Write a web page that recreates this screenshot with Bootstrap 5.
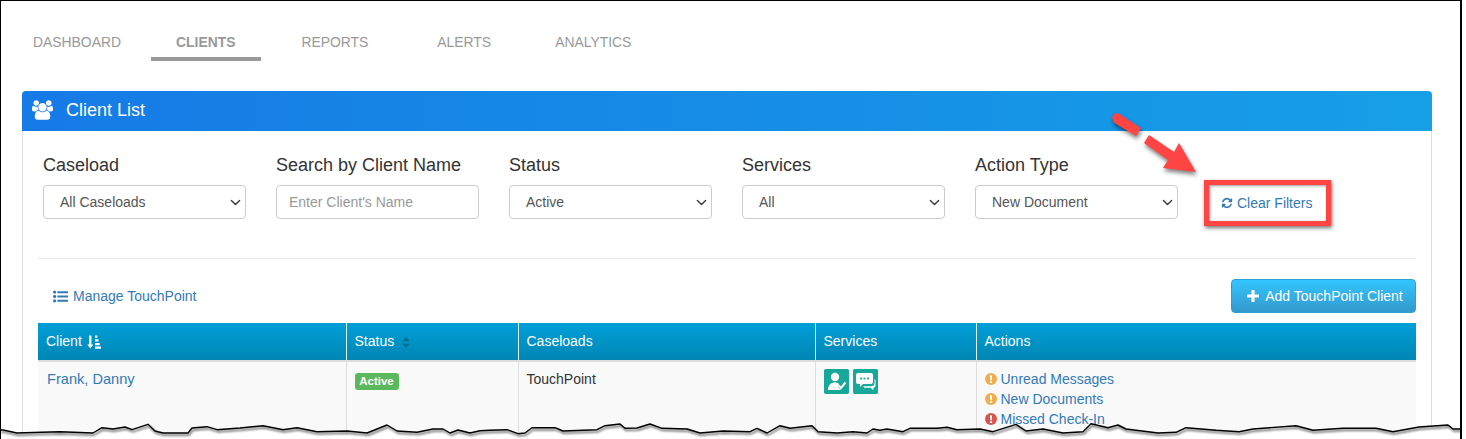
<!DOCTYPE html>
<html lang="en">
<head>
<meta charset="utf-8">
<title>Client List</title>
<link href="https://cdn.jsdelivr.net/npm/bootstrap@5.3.0/dist/css/bootstrap.min.css" rel="stylesheet">
<style>
html,body{margin:0;background:#fff;overflow:hidden}
body{font-family:"Liberation Sans",Arial,sans-serif;font-size:14px;color:#333;width:1466px;height:439px}
a{color:#337ab7;text-decoration:none}
.shot{position:relative;width:1462px;height:439px;border:solid #000;border-width:1px 2px 0 1px;overflow:hidden;padding:0 28px 0 21px;background:#fff}
.tabs{height:90px;padding-top:31px;flex-wrap:nowrap}
.tabs .nav-link{color:#999;font-size:13.9px;text-transform:uppercase;padding:0 25px;height:29px;line-height:21px;border-bottom:4px solid transparent;border-radius:0}
.tabs .nav-link.active-tab{font-weight:700;color:#999;border-bottom-color:#999;padding-right:26px}
.tab-first{margin-left:-14px;margin-right:5px}
.tab-second{margin-right:15px}
.tab-third{margin-right:19px}
.tab-fourth{margin-right:14px}
.panel{border:0;border-radius:4px 4px 0 0;--bs-card-border-color:transparent;background:transparent}
.panel-head{height:40px;background:linear-gradient(90deg,#167ae6,#169fe6);color:#fff;font-size:18px;border:0;padding:0 10px 2px;border-radius:4px 4px 0 0!important;gap:13px}
.panel-body{border:solid #ddd;border-width:0 1px;padding:0 15px;height:310px}
.filters{padding:20px 5px 0;gap:30px;height:128px;border-bottom:1px solid #e8e8e8}
.field{width:203px}
.field label{font-size:18px;line-height:28px;margin:0 0 6px;color:#333;display:block;white-space:nowrap}
.field .form-select,.field .form-control{height:34px;font-size:14px;color:#555;padding:0 30px 0 16px;border-color:#ccc;border-radius:4px;background-position:right 4px center;background-size:11px 11px}
.field .form-control{padding-left:12px}
.field .form-control::placeholder{color:#999}
.clear-link{margin:42px 0 0 13px;height:20px;line-height:20px;white-space:nowrap}
.toolbar{height:64px;padding:20px 0 10px 15px}
.toolbar .manage-link{gap:5px}
.add-btn{width:185px;height:34px;padding:0 0 0 3px;font-size:14px;color:#fff;background:linear-gradient(#33c5ff,#3399cc);border:1px solid #2f9fd3;border-radius:4px;display:flex;align-items:center;justify-content:center;gap:6px}
.add-btn:hover{color:#fff}
.tp-table{table-layout:fixed;width:1378px;margin:0;font-size:14px;color:#333;--bs-table-bg:#f9f9f9;--bs-table-color:#333}
.tp-table th{background:linear-gradient(#009fd9,#0086b3);color:#fff;font-weight:400;height:38px;padding:0 8px;border:0;border-left:1px solid #e4f3f9;border-bottom:2px solid #ddd;vertical-align:middle;box-shadow:none}
.tp-table th:first-child,.tp-table td:first-child{border-left:0}
.tp-table td{background:#f9f9f9;padding:7px 8px 8px;border:0;border-left:1px solid #ddd;vertical-align:top;height:80px;box-shadow:none;line-height:20px;color:#333}
.client-name{font-size:14.6px;padding-left:1px}
.status-pill{background:#5cb85c;color:#fff;font-size:11.5px;font-weight:700;padding:0;width:44px;height:17px;line-height:17px;border-radius:3px;display:block;margin-top:4px}
.svc{width:25px;height:25px;border-radius:2px;background:#17a89a;display:block}
.act{height:20px;white-space:nowrap;gap:4px}
.sort-icon{margin-left:1px}
.ann-box{position:absolute;left:1203px;top:179px;width:127px;height:46px;border:5px solid #ff4444;box-shadow:1px 2px 4px rgba(0,0,0,.55),inset 1px 1px 3px rgba(0,0,0,.4);pointer-events:none}
.ann-arrow{position:absolute;left:-1px;top:-1px;width:1466px;height:439px;pointer-events:none}
.arrow-art{filter:drop-shadow(1px 3px 2px rgba(0,0,0,.5))}
.tear-line{filter:drop-shadow(1px 2px 1.200px rgba(0,0,0,.7))}
</style>
</head>
<body>
<div class="shot">
  <ul class="nav tabs">
    <li class="nav-item tab-first"><a class="nav-link" href="#">Dashboard</a></li>
    <li class="nav-item tab-second"><a class="nav-link active-tab" href="#">Clients</a></li>
    <li class="nav-item tab-third"><a class="nav-link" href="#">Reports</a></li>
    <li class="nav-item tab-fourth"><a class="nav-link" href="#">Alerts</a></li>
    <li class="nav-item"><a class="nav-link" href="#">Analytics</a></li>
  </ul>
  <div class="card panel">
    <div class="card-header panel-head d-flex align-items-center">
      <svg width="21" height="20" viewBox="0 0 1920 1792" fill="#fff"><path d="M593 896q-162 5-265 128h-134q-82 0-138-40.5t-56-118.5q0-353 124-353 6 0 43.5 21t97.5 42.5 119 21.5q67 0 133-23-5 37-5 66 0 139 81 256zm1071 637q0 120-73 189.5t-194 69.5h-874q-121 0-194-69.5t-73-189.5q0-53 3.5-103.5t14-109 26.5-108.5 43-97.5 62-81 85.5-53.5 111.5-20q10 0 43 21.5t73 48 107 48 135 21.5 135-21.5 107-48 73-48 43-21.5q61 0 111.5 20t85.5 53.5 62 81 43 97.5 26.5 108.5 14 109 3.5 103.5zm-1024-1277q0 106-75 181t-181 75-181-75-75-181 75-181 181-75 181 75 75 181zm704 384q0 159-112.5 271.5t-271.5 112.5-271.5-112.5-112.5-271.5 112.5-271.5 271.5-112.5 271.5 112.5 112.5 271.5zm576 225q0 78-56 118.5t-138 40.5h-134q-103-123-265-128 81-117 81-256 0-29-5-66 66 23 133 23 59 0 119-21.5t97.5-42.5 43.5-21q124 0 124 353zm-128-609q0 106-75 181t-181 75-181-75-75-181 75-181 181-75 181 75 75 181z"/></svg>
      <span>Client List</span>
    </div>
    <div class="card-body panel-body">
      <div class="d-flex filters">
        <div class="field"><label>Caseload</label><select class="form-select"><option>All Caseloads</option></select></div>
        <div class="field"><label>Search by Client Name</label><input class="form-control" placeholder="Enter Client's Name"></div>
        <div class="field"><label>Status</label><select class="form-select"><option>Active</option></select></div>
        <div class="field"><label>Services</label><select class="form-select"><option>All</option></select></div>
        <div class="field"><label>Action Type</label><select class="form-select"><option>New Document</option></select></div>
        <a class="clear-link d-flex align-items-center gap-1" href="#">
          <svg width="12" height="12" viewBox="0 0 1792 1792" fill="#337ab7"><path d="M1639 1056q0 5-1 7-64 268-268 434.5t-478 166.5q-146 0-282.5-55t-243.5-157l-129 129q-19 19-45 19t-45-19-19-45v-448q0-26 19-45t45-19h448q26 0 45 19t19 45-19 45l-137 137q71 66 161 102t187 36q134 0 250-65t186-179q11-17 53-117 8-23 30-23h192q13 0 22.5 9.5t9.5 22.5zm25-800v448q0 26-19 45t-45 19h-448q-26 0-45-19t-19-45 19-45l138-138q-148-137-349-137-134 0-250 65t-186 179q-11 17-53 117-8 23-30 23h-199q-13 0-22.5-9.5t-9.5-22.5v-7q65-268 270-434.5t480-166.5q146 0 284 55.5t245 156.5l130-129q19-19 45-19t45 19 19 45z"/></svg>
          <span>Clear Filters</span>
        </a>
      </div>
      <div class="d-flex justify-content-between align-items-center toolbar">
        <a class="d-flex align-items-center manage-link" href="#">
          <svg width="15" height="15" viewBox="0 0 1792 1792" fill="#337ab7"><path d="M384 1408q0 80-56 136t-136 56-136-56-56-136 56-136 136-56 136 56 56 136zm0-512q0 80-56 136t-136 56-136-56-56-136 56-136 136-56 136 56 56 136zm1408 416v192q0 13-9.5 22.5t-22.5 9.5h-1216q-13 0-22.5-9.5t-9.5-22.5v-192q0-13 9.5-22.5t22.5-9.5h1216q13 0 22.5 9.5t9.5 22.5zm-1408-928q0 80-56 136t-136 56-136-56-56-136 56-136 136-56 136 56 56 136zm1408 416v192q0 13-9.5 22.5t-22.5 9.5h-1216q-13 0-22.5-9.5t-9.5-22.5v-192q0-13 9.5-22.5t22.5-9.5h1216q13 0 22.5 9.5t9.5 22.5zm0-512v192q0 13-9.5 22.5t-22.5 9.5h-1216q-13 0-22.5-9.5t-9.5-22.5v-192q0-13 9.5-22.5t22.5-9.5h1216q13 0 22.5 9.5t9.5 22.5z"/></svg>
          <span>Manage TouchPoint</span>
        </a>
        <a class="btn add-btn" href="#">
          <svg width="12" height="12" viewBox="0 0 12 12" fill="#fff"><path d="M4.400 0h3.200v4.400H12v3.200H7.600V12H4.400V7.600H0V4.400h4.400z"/></svg>
          <span>Add TouchPoint Client</span>
        </a>
      </div>
      <table class="table tp-table">
        <colgroup><col style="width:308px"><col style="width:172px"><col style="width:297px"><col style="width:161px"><col style="width:440px"></colgroup>
        <thead>
          <tr>
            <th>Client <svg width="14" height="14" viewBox="0 0 14 14" fill="#fff" class="align-text-bottom sort-icon"><path d="M2.200 .5h2.200v9h2L3.300 13.500 .2 9.500h2zM8 .5h2.400v2.300H8zM8 4.200h3.500v2.300H8zM8 7.900h4.700v2.300H8zM8 11.500h6v2.200H8z"/></svg></th>
            <th>Status <svg width="8" height="11" viewBox="0 0 8 11" fill="#0a6c93" class="ms-1"><path d="M4 0l3.600 4.300H.4zM4 11L.4 6.700h7.200z"/></svg></th>
            <th>Caseloads</th>
            <th>Services</th>
            <th>Actions</th>
          </tr>
        </thead>
        <tbody>
          <tr>
            <td><a class="client-name" href="#">Frank, Danny</a></td>
            <td><span class="badge status-pill">Active</span></td>
            <td>TouchPoint</td>
            <td>
              <div class="d-flex gap-1">
                <svg class="svc" viewBox="0 0 25 25"><rect width="25" height="25" rx="2" fill="#17a89a"/><circle cx="11" cy="8" r="4.200" fill="#fff"/><path d="M4 21c0-5 3-7.500 7-7.500 2 0 3 .5 4 1.500l-1 3 3 3z" fill="#fff"/><path d="M14.500 16.500l2.500 2.500 4.500-5.500" fill="none" stroke="#fff" stroke-width="2"/></svg>
                <svg class="svc" viewBox="0 0 25 25"><rect width="25" height="25" rx="2" fill="#17a89a"/><path d="M5 4h13a2 2 0 0 1 2 2v7a2 2 0 0 1-2 2h-8l-3 3v-3H5a2 2 0 0 1-2-2V6a2 2 0 0 1 2-2z" fill="#fff"/><path d="M21.500 10a2 2 0 0 1 1 1.800v5a2 2 0 0 1-2 2v2.500l-3-2.500h-6l-1.500-1.500h8c2 0 3.500-1 3.500-3z" fill="#fff"/><circle cx="8" cy="9.500" r="1.100" fill="#17a89a"/><circle cx="11.500" cy="9.500" r="1.100" fill="#17a89a"/><circle cx="15" cy="9.500" r="1.100" fill="#17a89a"/></svg>
              </div>
            </td>
            <td>
              <div class="act d-flex align-items-center"><svg width="12" height="12" viewBox="0 0 12 12"><circle cx="6" cy="6" r="6" fill="#f0ad4e"/><path d="M4.900 2.200h2.200l-.3 5H5.200zM4.900 8.200h2.200v1.700H4.900z" fill="#fff"/></svg><a href="#">Unread Messages</a></div>
              <div class="act d-flex align-items-center"><svg width="12" height="12" viewBox="0 0 12 12"><circle cx="6" cy="6" r="6" fill="#f0ad4e"/><path d="M4.900 2.200h2.200l-.3 5H5.200zM4.900 8.200h2.200v1.700H4.900z" fill="#fff"/></svg><a href="#">New Documents</a></div>
              <div class="act d-flex align-items-center"><svg width="12" height="12" viewBox="0 0 12 12"><circle cx="6" cy="6" r="6" fill="#d9534f"/><path d="M4.900 2.200h2.200l-.3 5H5.200zM4.900 8.200h2.200v1.700H4.900z" fill="#fff"/></svg><a href="#">Missed Check-In</a></div>
            </td>
          </tr>
        </tbody>
      </table>
    </div>
  </div>
  <div class="ann-box"></div>
  <svg class="ann-arrow" viewBox="0 0 1466 439" aria-hidden="true">
    <g class="arrow-art" fill="#ff4444">
      <circle cx="1117" cy="118" r="4.700"/>
      <path d="M1119.500 114L1141 128 1136 136 1113 122Z"/>
      <path d="M1149 135L1174 152 1179 143 1196 172 1163 168 1168 160 1144 143Z"/>
    </g>
    <path d="M0 430L3 430 17 433 33 432.500 60 431.700 93 433 102 427.700 113 429 125 427 132 429.700 148 424.300 155 431 163 433 188 433 192 428 207 426.700 217 429.700 240 428 263 425.700 283 429.700 297 427.700 317 431.700 347 431 367 433 387 425 397 431 417 432.300 433 429 443 429 450 433 458 430 470 433 480 430.700 490 430.300 507 429.700 518 433.700 525 433 532 427.700 555 427.700 563 431 597 429.700 605 425.700 620 424 625 428.300 637 428 650 424 662 428.300 687 429 700 433 723 431 750 431.700 757 428.300 767 433 780 425.700 790 428.300 812 425.700 818 431.700 837 433 853 431.700 867 433 873 429 880 430.300 887 429 903 431.700 910 428.300 937 428.300 947 427.300 957 429.700 980 429 993 431.700 1016 424.300 1026 431 1043 429 1063 433 1083 431.700 1091 423.700 1108 427.700 1118 425 1126 429 1158 433 1176 432.300 1186 427.700 1216 430.300 1239 431.700 1253 429 1296 425.700 1313 430.300 1343 428.300 1376 428.300 1393 431.700 1419 427 1448 425 1453 429 1460 429 1462 429L1462 439 0 439Z" fill="#fff"/>
    <path class="tear-line" d="M0 430L3 430 17 433 33 432.500 60 431.700 93 433 102 427.700 113 429 125 427 132 429.700 148 424.300 155 431 163 433 188 433 192 428 207 426.700 217 429.700 240 428 263 425.700 283 429.700 297 427.700 317 431.700 347 431 367 433 387 425 397 431 417 432.300 433 429 443 429 450 433 458 430 470 433 480 430.700 490 430.300 507 429.700 518 433.700 525 433 532 427.700 555 427.700 563 431 597 429.700 605 425.700 620 424 625 428.300 637 428 650 424 662 428.300 687 429 700 433 723 431 750 431.700 757 428.300 767 433 780 425.700 790 428.300 812 425.700 818 431.700 837 433 853 431.700 867 433 873 429 880 430.300 887 429 903 431.700 910 428.300 937 428.300 947 427.300 957 429.700 980 429 993 431.700 1016 424.300 1026 431 1043 429 1063 433 1083 431.700 1091 423.700 1108 427.700 1118 425 1126 429 1158 433 1176 432.300 1186 427.700 1216 430.300 1239 431.700 1253 429 1296 425.700 1313 430.300 1343 428.300 1376 428.300 1393 431.700 1419 427 1448 425 1453 429 1462 429" fill="none" stroke="#000" stroke-width="1.400" stroke-linejoin="round"/>
  </svg>
</div>
<script src="https://cdn.jsdelivr.net/npm/bootstrap@5.3.0/dist/js/bootstrap.bundle.min.js"></script>
</body>
</html>
